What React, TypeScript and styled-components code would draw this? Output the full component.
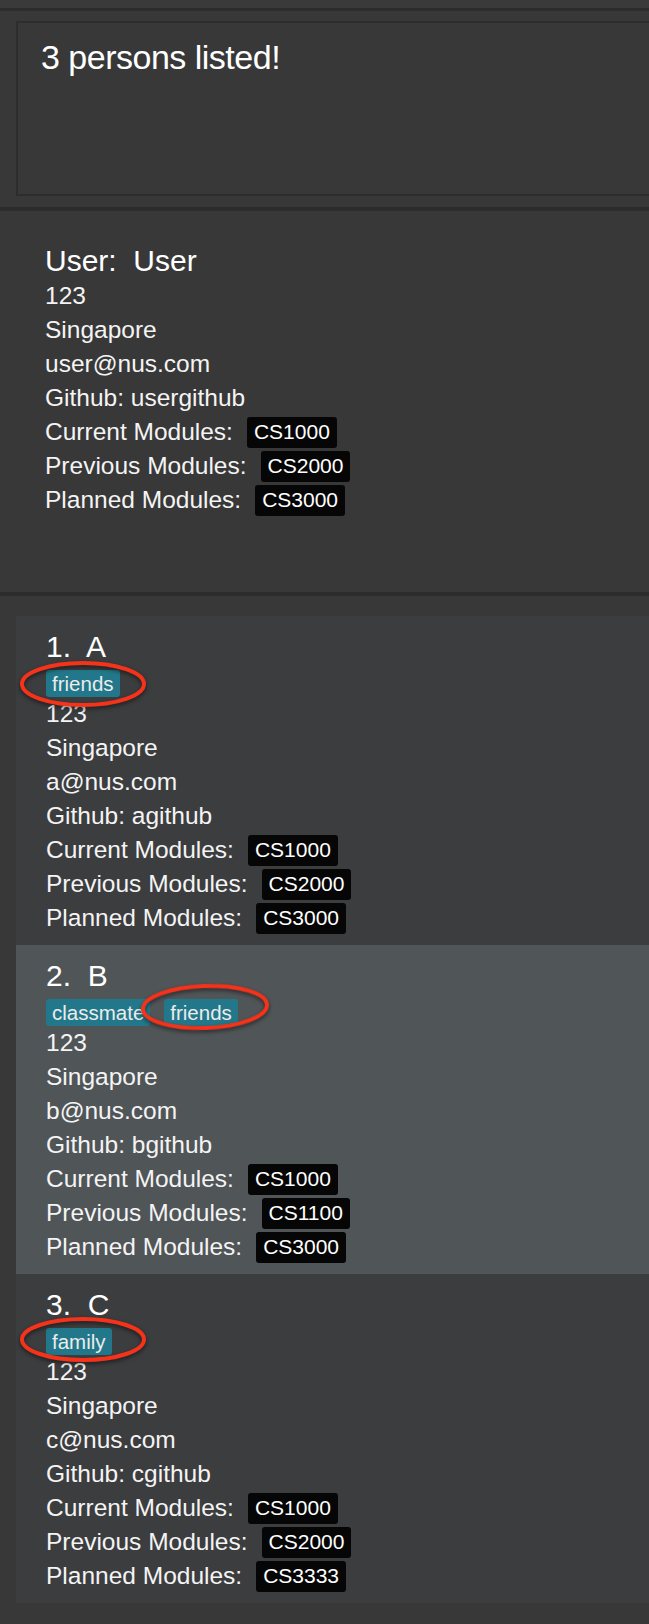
import React from 'react';
import styled, { createGlobalStyle } from 'styled-components';

const GlobalStyle = createGlobalStyle`
  html, body {
    margin: 0;
    padding: 0;
    background: #383838;
  }
  body {
    font-family: "Liberation Sans", Arial, sans-serif;
    color: #f4f4f4;
  }
`;

const Page = styled.div`
  display: flex;
  flex-direction: column;
  width: 649px;
  min-height: 1624px;
  background: #383838;
  overflow: hidden;
`;

const TopStrip = styled.div`
  height: 8px;
  background: #3a3a3a;
  flex-shrink: 0;
`;

const Divider = styled.div<{ $h: number }>`
  height: ${(p) => p.$h}px;
  background: #2c2c2c;
  flex-shrink: 0;
`;

const ResultPanel = styled.section`
  height: 196px;
  box-sizing: border-box;
  padding: 10px 0 0 16px;
  flex-shrink: 0;
`;

const ResultBox = styled.div`
  width: 680px;
  height: 175px;
  box-sizing: border-box;
  border: 2px solid #2d2d2d;
  padding: 14px 0 0 23px;
  background: #383838;
`;

const ResultText = styled.div`
  font-size: 34px;
  line-height: 40px;
  letter-spacing: -0.5px;
  color: #ffffff;
`;

const UserPanel = styled.section`
  height: 381px;
  box-sizing: border-box;
  padding: 32px 0 0 45px;
  flex-shrink: 0;
`;

const NameLine = styled.div`
  font-size: 30px;
  line-height: 36px;
  white-space: pre;
  color: #ffffff;
`;

const InfoLine = styled.div`
  display: flex;
  align-items: center;
  gap: 14px;
  height: 34px;
  font-size: 24.5px;
  white-space: pre;
`;

const ModuleChip = styled.span`
  display: inline-flex;
  align-items: center;
  height: 31px;
  padding: 0 7px;
  background: #060606;
  border-radius: 3px;
  font-size: 21px;
  color: #ffffff;
`;

const ListPanel = styled.section`
  display: flex;
  flex-direction: column;
  padding: 20px 0 17px 16px;
`;

const Card = styled.article<{ $alt?: boolean }>`
  position: relative;
  width: 660px;
  height: 329px;
  box-sizing: border-box;
  padding: 13px 0 0 30px;
  background: ${(p) => (p.$alt ? '#505558' : '#3c3d3f')};
`;

const TagRow = styled.div`
  display: flex;
  gap: 14px;
  margin-top: 5px;
  height: 27px;
`;

const Tag = styled.span`
  display: inline-flex;
  align-items: center;
  height: 27px;
  padding: 0 6px;
  background: #22788a;
  border-radius: 3px;
  font-size: 20.5px;
  color: #ececec;
`;

const Mark = styled.svg`
  position: absolute;
  overflow: visible;
  pointer-events: none;
  filter: drop-shadow(0 2px 2px rgba(0, 0, 0, 0.55));
`;

type HighlightProps = { left: number; top: number; w: number; h: number; rotate?: number };

const Highlight = ({ left, top, w, h, rotate = 0 }: HighlightProps) => (
  <Mark
    width={w}
    height={h}
    viewBox={`0 0 ${w} ${h}`}
    style={{ left, top, transform: `rotate(${rotate}deg)` }}
  >
    <ellipse
      cx={w / 2}
      cy={h / 2}
      rx={w / 2 - 2}
      ry={h / 2 - 2}
      fill="none"
      stroke="#f5321a"
      strokeWidth={4}
    />
  </Mark>
);

type Modules = { current: string; previous: string; planned: string };

const Details = ({
  phone,
  address,
  email,
  github,
  modules,
}: {
  phone: string;
  address: string;
  email: string;
  github: string;
  modules: Modules;
}) => (
  <>
    <InfoLine>{phone}</InfoLine>
    <InfoLine>{address}</InfoLine>
    <InfoLine>{email}</InfoLine>
    <InfoLine>Github: {github}</InfoLine>
    <InfoLine>
      Current Modules:
      <ModuleChip>{modules.current}</ModuleChip>
    </InfoLine>
    <InfoLine>
      Previous Modules:
      <ModuleChip>{modules.previous}</ModuleChip>
    </InfoLine>
    <InfoLine>
      Planned Modules:
      <ModuleChip>{modules.planned}</ModuleChip>
    </InfoLine>
  </>
);

const persons = [
  {
    name: 'A',
    tags: ['friends'],
    email: 'a@nus.com',
    github: 'agithub',
    modules: { current: 'CS1000', previous: 'CS2000', planned: 'CS3000' },
    mark: { left: 4, top: 45, w: 126, h: 46, rotate: 0 },
  },
  {
    name: 'B',
    tags: ['classmate', 'friends'],
    email: 'b@nus.com',
    github: 'bgithub',
    modules: { current: 'CS1000', previous: 'CS1100', planned: 'CS3000' },
    mark: { left: 125, top: 39, w: 128, h: 46, rotate: -2 },
  },
  {
    name: 'C',
    tags: ['family'],
    email: 'c@nus.com',
    github: 'cgithub',
    modules: { current: 'CS1000', previous: 'CS2000', planned: 'CS3333' },
    mark: { left: 4, top: 43, w: 126, h: 45, rotate: 0 },
  },
];

export default function App() {
  return (
    <Page>
      <GlobalStyle />
      <TopStrip />
      <Divider $h={3} />
      <ResultPanel>
        <ResultBox>
          <ResultText>3 persons listed!</ResultText>
        </ResultBox>
      </ResultPanel>
      <Divider $h={4} />
      <UserPanel>
        <NameLine>{'User:  User'}</NameLine>
        <Details
          phone="123"
          address="Singapore"
          email="user@nus.com"
          github="usergithub"
          modules={{ current: 'CS1000', previous: 'CS2000', planned: 'CS3000' }}
        />
      </UserPanel>
      <Divider $h={4} />
      <ListPanel>
        {persons.map((p, i) => (
          <Card key={p.name} $alt={i % 2 === 1}>
            <NameLine>{`${i + 1}.  ${p.name}`}</NameLine>
            <TagRow>
              {p.tags.map((t) => (
                <Tag key={t}>{t}</Tag>
              ))}
            </TagRow>
            <Details
              phone="123"
              address="Singapore"
              email={p.email}
              github={p.github}
              modules={p.modules}
            />
            <Highlight {...p.mark} />
          </Card>
        ))}
      </ListPanel>
    </Page>
  );
}
